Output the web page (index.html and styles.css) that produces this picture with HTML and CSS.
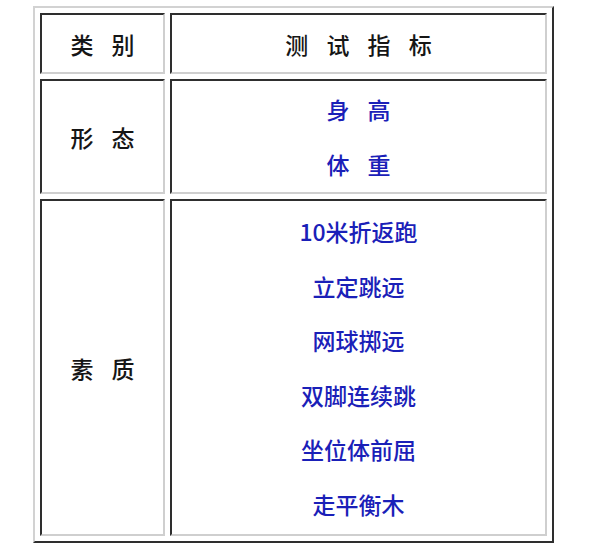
FILE: index.html
```html
<!DOCTYPE html>
<html lang="zh">
<head>
<meta charset="utf-8">
<title>测试指标</title>
<link rel="stylesheet" href="styles.css">
</head>
<body>
<div class="page">
  <table class="grid">
    <colgroup>
      <col class="col-cat">
      <col class="col-item">
    </colgroup>
    <tr class="row-head">
      <td class="head spaced">类 别</td>
      <td class="head spaced">测 试 指 标</td>
    </tr>
    <tr class="row-shape">
      <td class="cat spaced">形 态</td>
      <td class="items">
        <div class="item spaced">身 高</div>
        <div class="item spaced">体 重</div>
      </td>
    </tr>
    <tr class="row-quality">
      <td class="cat spaced">素 质</td>
      <td class="items">
        <div class="item">10米折返跑</div>
        <div class="item">立定跳远</div>
        <div class="item">网球掷远</div>
        <div class="item">双脚连续跳</div>
        <div class="item">坐位体前屈</div>
        <div class="item">走平衡木</div>
      </td>
    </tr>
  </table>
</div>
</body>
</html>
```

FILE: styles.css
```css
html, body {
  margin: 0;
  padding: 0;
  background: #ffffff;
}

.page {
  padding: 6px 0 0 33px;
  font-family: "Noto Sans CJK SC", "Noto Sans", sans-serif;
}

.grid {
  width: 521px;
  table-layout: fixed;
  border-collapse: separate;
  border-spacing: 5px;
  border: 2px solid;
  border-color: #d2d2d2 #2e2e2e #2e2e2e #d2d2d2;
  box-sizing: border-box;
}

.col-cat { width: 125px; }
.col-item { width: auto; }

.grid td {
  box-sizing: border-box;
  padding: 0;
  border: 2px solid;
  border-color: #2e2e2e #cfcfcf #cfcfcf #2e2e2e;
  text-align: center;
  vertical-align: middle;
  font-size: 23px;
  font-weight: 500;
}

.row-head td { height: 61px; }
.row-shape td { height: 115px; }
.row-quality td { height: 337px; }

.head, .cat {
  color: #161616;
}

.spaced {
  word-spacing: 13px;
}

.item {
  color: #1a20b8;
  line-height: 54.5px;
}
```
